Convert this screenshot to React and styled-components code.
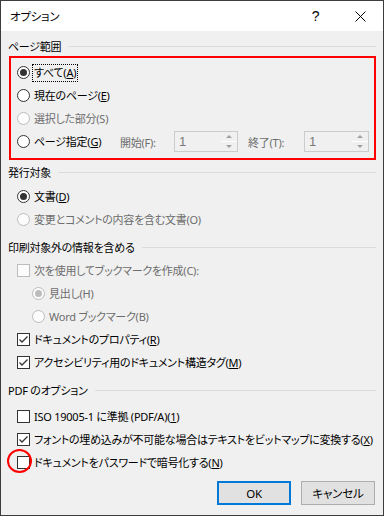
import React from "react";
import styled, { createGlobalStyle } from "styled-components";

const GlobalStyle = createGlobalStyle`
  html, body {
    margin: 0;
    padding: 0;
    background: #f0f0f0;
  }
  body {
    font-family: "Noto Sans", "Noto Sans CJK JP", sans-serif;
    font-size: 11px;
    letter-spacing: -0.25px;
    font-feature-settings: "palt";
  }
`;

const Window = styled.div`
  width: 384px;
  height: 516px;
  box-sizing: border-box;
  border: 1px solid #3c3c3c;
  background: #f0f0f0;
  display: flex;
  flex-direction: column;
  overflow: hidden;
`;

const TitleBar = styled.div`
  height: 30px;
  background: #fff;
  display: flex;
  align-items: center;
  padding-left: 9px;
  flex-shrink: 0;
`;

const Title = styled.div`
  flex: 1;
  color: #000;
  font-size: 11.5px;
`;

const CaptionButton = styled.div`
  width: 45px;
  height: 30px;
  display: flex;
  align-items: center;
  justify-content: center;
  color: #000;
  font-size: 14px;
  font-family: "Liberation Sans", sans-serif;
`;

const Body = styled.div`
  flex: 1;
  padding: 0 7px;
  display: flex;
  flex-direction: column;
`;

const Legend = styled.div`
  height: 16px;
  margin-top: ${(p) => p.$top}px;
  display: flex;
  align-items: center;
  gap: 7px;
  color: #000;
  white-space: nowrap;

  &::after {
    content: "";
    flex: 1;
    height: 1px;
    background: #dcdcdc;
  }
`;

const RedBox = styled.div`
  margin: 2px 0 0 1px;
  border: 2px solid #ff0000;
  padding: 3px 0 5px 0;
`;

const Group = styled.div`
  margin-top: ${(p) => p.$top}px;
`;

const Row = styled.div`
  position: relative;
  height: 23px;
  display: flex;
  align-items: center;
  padding-left: ${(p) => p.$pad}px;
  color: ${(p) => (p.$disabled ? "#6d6d6d" : "#000")};
  white-space: nowrap;
`;

const RadioMark = styled.span`
  width: 13px;
  height: 13px;
  box-sizing: border-box;
  border-radius: 50%;
  border: 1px solid ${(p) => (p.$disabled ? "#bcbcbc" : "#333")};
  background: ${(p) => (p.$disabled ? "#fcfcfc" : "#fff")};
  display: flex;
  align-items: center;
  justify-content: center;
  flex-shrink: 0;

  &::after {
    content: "";
    display: ${(p) => (p.$checked ? "block" : "none")};
    width: 7px;
    height: 7px;
    border-radius: 50%;
    background: ${(p) => (p.$disabled ? "#bcbcbc" : "#333")};
  }
`;

const CheckMark = styled.span`
  width: 13px;
  height: 13px;
  box-sizing: border-box;
  border: 1px solid ${(p) => (p.$disabled ? "#bcbcbc" : "#333")};
  background: ${(p) => (p.$disabled ? "#fcfcfc" : "#fff")};
  display: flex;
  align-items: center;
  justify-content: center;
  flex-shrink: 0;
`;

const Label = styled.span`
  margin-left: ${(p) => (p.$focus ? 2 : 4)}px;
  padding: 0 ${(p) => (p.$focus ? 1 : 0)}px;
  border: ${(p) => (p.$focus ? "1px dotted #000" : "none")};
  line-height: 16px;
`;

const OptionBox = styled.span`
  display: flex;
  align-items: center;
  width: ${(p) => (p.$width ? `${p.$width}px` : "auto")};
  flex-shrink: 0;
`;

const FieldLabel = styled.span`
  width: ${(p) => p.$width}px;
  color: #6d6d6d;
  flex-shrink: 0;
`;

const SpinBox = styled.div`
  width: ${(p) => p.$width}px;
  height: 21px;
  box-sizing: border-box;
  border: 1px solid #cccccc;
  background: #f0f0f0;
  display: flex;
  flex-shrink: 0;
`;

const SpinText = styled.div`
  flex: 1;
  padding-left: 4px;
  color: #7a7a7a;
  font-size: 13px;
  line-height: 19px;
  font-family: "Liberation Sans", sans-serif;
`;

const SpinButtons = styled.div`
  width: 16px;
  display: flex;
  flex-direction: column;
`;

const SpinHalf = styled.div`
  flex: 1;
  display: flex;
  align-items: center;
  justify-content: center;
  border-top: ${(p) => (p.$down ? "1px solid #ffffff" : "none")};

  &::after {
    content: "";
    width: 0;
    height: 0;
    border-left: 3px solid transparent;
    border-right: 3px solid transparent;
    ${(p) =>
      p.$down
        ? "border-top: 3px solid #a0a0a0;"
        : "border-bottom: 3px solid #a0a0a0;"}
  }
`;

const Gap = styled.span`
  width: ${(p) => p.$w}px;
  flex-shrink: 0;
`;

const RedCircle = styled.span`
  position: absolute;
  left: -1px;
  top: -2px;
  width: 25px;
  height: 24px;
  box-sizing: border-box;
  border: 2px solid #ff0000;
  border-radius: 50%;
`;

const ButtonBar = styled.div`
  margin-top: 7px;
  display: flex;
  justify-content: flex-end;
  gap: 10px;
  padding-right: 1px;
`;

const Button = styled.button`
  width: 74px;
  height: 24px;
  box-sizing: border-box;
  background: #e1e1e1;
  border: ${(p) => (p.$primary ? "2px solid #0078d7" : "1px solid #adadad")};
  font-family: "Noto Sans", "Noto Sans CJK JP", sans-serif;
  font-feature-settings: "palt";
  font-size: 11.5px;
  letter-spacing: -0.2px;
  color: #000;
  padding: 0;
`;

function Check() {
  return (
    <svg width="11" height="11" viewBox="0 0 11 11">
      <polyline
        points="1.5,5.5 4,8 9.5,2.5"
        fill="none"
        stroke="#333"
        strokeWidth="1.3"
      />
    </svg>
  );
}

function Radio({ checked, disabled, focus, width, children }) {
  return (
    <OptionBox $width={width}>
      <RadioMark $checked={checked} $disabled={disabled} />
      <Label $focus={focus}>{children}</Label>
    </OptionBox>
  );
}

function Checkbox({ checked, disabled, children }) {
  return (
    <OptionBox>
      <CheckMark $disabled={disabled}>{checked && <Check />}</CheckMark>
      <Label>{children}</Label>
    </OptionBox>
  );
}

function Spin({ width }) {
  return (
    <SpinBox $width={width}>
      <SpinText>1</SpinText>
      <SpinButtons>
        <SpinHalf />
        <SpinHalf $down />
      </SpinButtons>
    </SpinBox>
  );
}

export default function App() {
  return (
    <>
      <GlobalStyle />
      <Window>
        <TitleBar>
          <Title>オプション</Title>
          <CaptionButton>?</CaptionButton>
          <CaptionButton>
            <svg width="11" height="11" viewBox="0 0 11 11">
              <path d="M0.5 0.5 L10.5 10.5 M10.5 0.5 L0.5 10.5" stroke="#000" strokeWidth="1" />
            </svg>
          </CaptionButton>
        </TitleBar>
        <Body>
          <Legend $top={7}>ページ範囲</Legend>
          <RedBox>
            <Row $pad={6}>
              <Radio checked focus>
                すべて(<u>A</u>)
              </Radio>
            </Row>
            <Row $pad={6}>
              <Radio>
                現在のページ(<u>E</u>)
              </Radio>
            </Row>
            <Row $pad={6} $disabled>
              <Radio disabled>選択した部分(S)</Radio>
            </Row>
            <Row $pad={6}>
              <Radio width={103}>
                ページ指定(<u>G</u>)
              </Radio>
              <FieldLabel $width={54}>開始(F):</FieldLabel>
              <Spin width={64} />
              <Gap $w={10} />
              <FieldLabel $width={56}>終了(T):</FieldLabel>
              <Spin width={65} />
            </Row>
          </RedBox>

          <Legend $top={4}>発行対象</Legend>
          <Group $top={5}>
            <Row $pad={9}>
              <Radio checked>
                文書(<u>D</u>)
              </Radio>
            </Row>
            <Row $pad={9} $disabled>
              <Radio disabled>変更とコメントの内容を含む文書(O)</Radio>
            </Row>
          </Group>

          <Legend $top={8}>印刷対象外の情報を含める</Legend>
          <Group $top={4}>
            <Row $pad={9} $disabled>
              <Checkbox disabled>次を使用してブックマークを作成(C):</Checkbox>
            </Row>
            <Row $pad={24} $disabled>
              <Radio checked disabled>
                見出し(H)
              </Radio>
            </Row>
            <Row $pad={24} $disabled>
              <Radio disabled>Word ブックマーク(B)</Radio>
            </Row>
            <Row $pad={9}>
              <Checkbox checked>
                ドキュメントのプロパティ(<u>R</u>)
              </Checkbox>
            </Row>
            <Row $pad={9}>
              <Checkbox checked>
                アクセシビリティ用のドキュメント構造タグ(<u>M</u>)
              </Checkbox>
            </Row>
          </Group>

          <Legend $top={8}>PDF のオプション</Legend>
          <Group $top={7}>
            <Row $pad={9}>
              <Checkbox>
                ISO 19005-1 に準拠 (PDF/A)(<u>1</u>)
              </Checkbox>
            </Row>
            <Row $pad={9}>
              <Checkbox checked>
                フォントの埋め込みが不可能な場合はテキストをビットマップに変換する(<u>X</u>)
              </Checkbox>
            </Row>
            <Row $pad={9}>
              <Checkbox>
                ドキュメントをパスワードで暗号化する(<u>N</u>)
              </Checkbox>
              <RedCircle />
            </Row>
          </Group>

          <ButtonBar>
            <Button $primary>OK</Button>
            <Button>キャンセル</Button>
          </ButtonBar>
        </Body>
      </Window>
    </>
  );
}
